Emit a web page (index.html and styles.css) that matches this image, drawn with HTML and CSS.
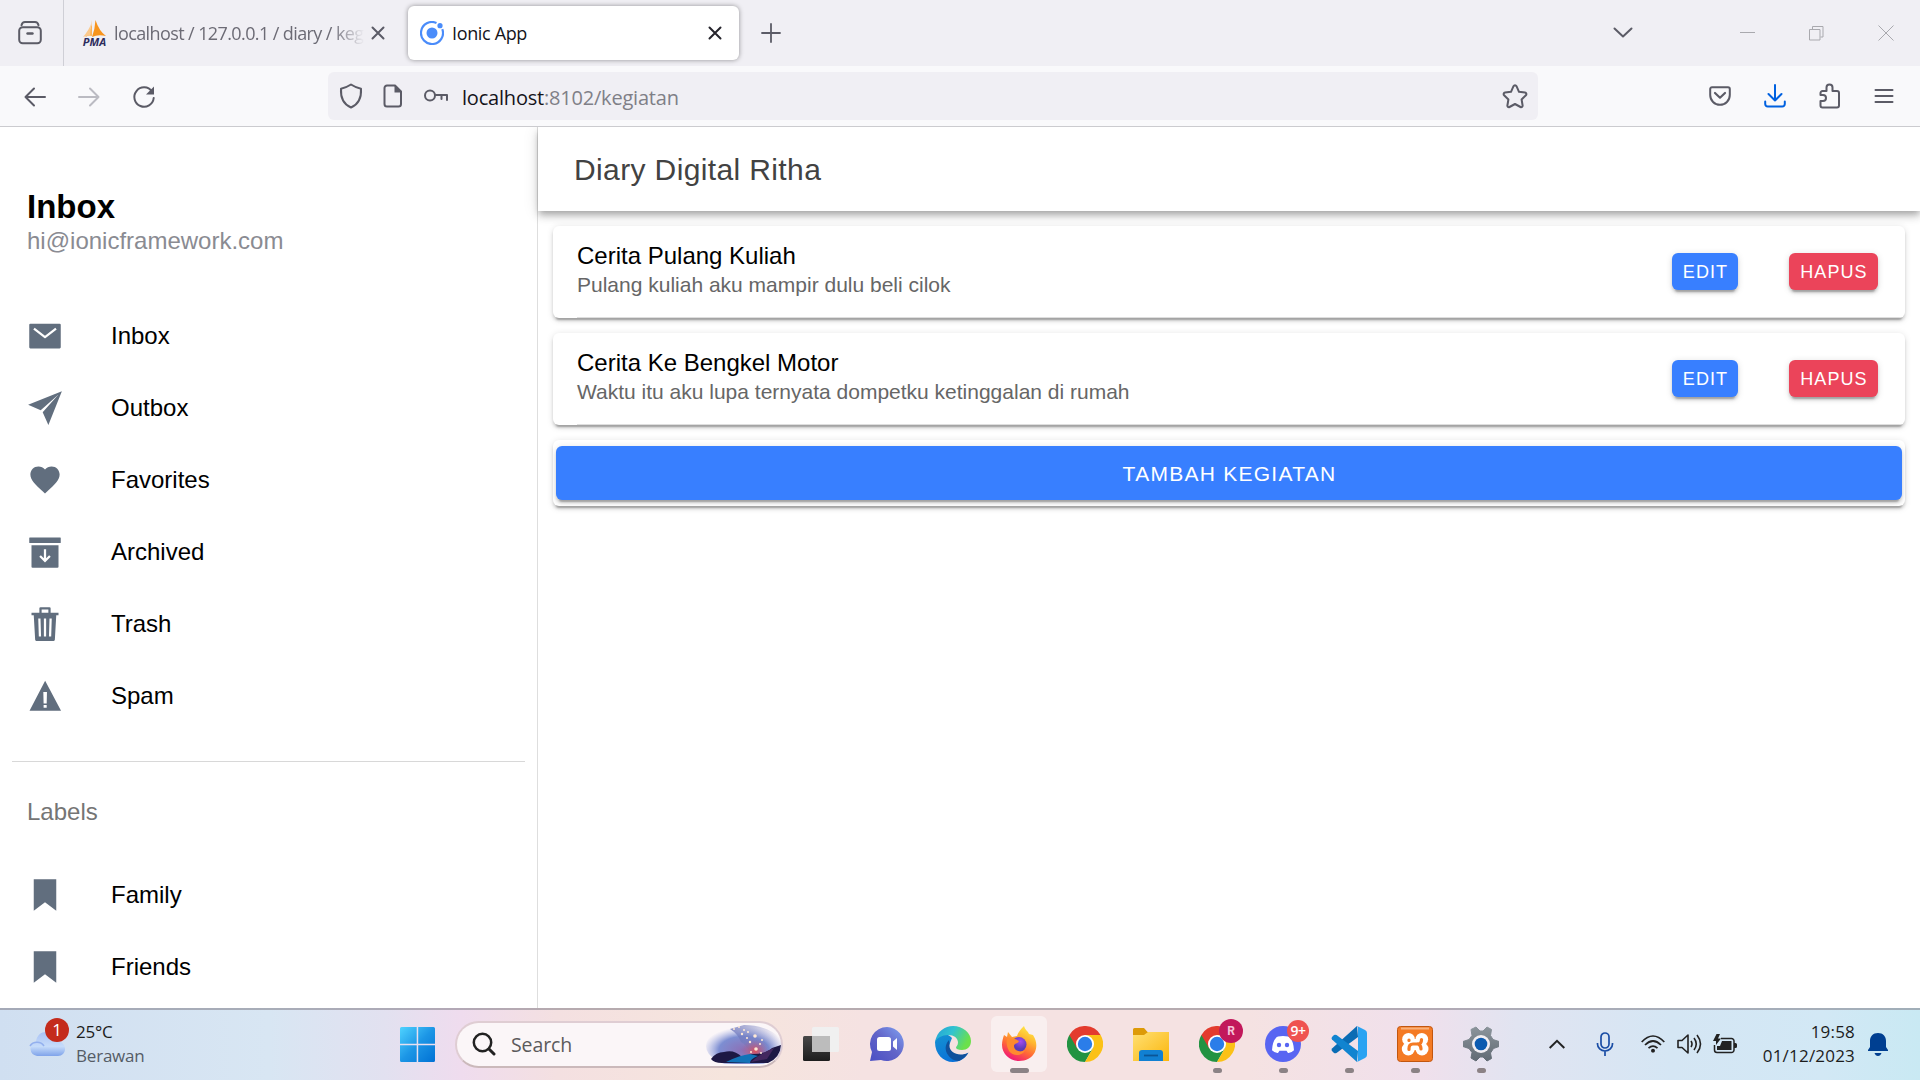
FILE: index.html
```html
<!DOCTYPE html>
<html lang="id">
<head>
<meta charset="utf-8">
<title>Ionic App</title>
<link rel="stylesheet" href="styles.css">
</head>
<body>
<div class="screen">
  <header class="tabbar">
    <div class="recent"><svg width="26" height="26" viewBox="0 0 26 26" class="ln"><path d="M4.5 5.2C5 3 6 2 8 2h10c2 0 3 1 3.500 3.200"/><rect x="2.200" y="7.200" width="21.600" height="16" rx="3.500"/><path d="M10.500 13.500h5" stroke-width="2.400"/></svg></div>
    <div class="tab tab-idle">
      <span class="pma"><svg width="24" height="18" viewBox="0 0 24 18"><path d="M9 0Q9 10 2 17Q6 15 9 16Z" fill="#fbb45c"/><path d="M12.500 0Q12 9 9 17Q15 14 23 16Q16 11 12.500 0Z" fill="#f7941d"/><path d="M8 4Q6 10 0 17Q5 15 7 16Z" fill="#fcc98b"/></svg><b>PMA</b></span>
      <span class="tab-text fade">localhost / 127.0.0.1 / diary / keg</span>
      <svg class="ln" width="14" height="14" viewBox="0 0 14 14"><path d="M1.500 1.500l11 11M12.500 1.500l-11 11"/></svg>
    </div>
    <div class="tab tab-active">
      <svg width="24" height="24" viewBox="0 0 24 24"><circle cx="12" cy="12" r="5.500" fill="#4a8cfa"/><circle cx="20" cy="4.700" r="2.600" fill="#4a8cfa"/><path d="M16.500 2A11 11 0 1 0 22.300 8.200" fill="none" stroke="#4a8cfa" stroke-width="2.200"/></svg>
      <span class="tab-text">Ionic App</span>
      <svg class="ln dark" width="14" height="14" viewBox="0 0 14 14"><path d="M1.500 1.500l11 11M12.500 1.500l-11 11"/></svg>
    </div>
    <svg class="plus ln" width="20" height="20" viewBox="0 0 20 20"><path d="M10 1v18M1 10h18" stroke-width="1.800"/></svg>
    <div class="window-controls">
      <svg class="ln" width="20" height="12" viewBox="0 0 20 12"><path d="M1.500 1.500L10 9.500l8.500-8" stroke-width="2"/></svg>
      <svg class="thin c-min" width="16" height="16" viewBox="0 0 16 16"><path d="M0 7.500h15"/></svg>
      <svg class="thin c-max" width="15" height="15" viewBox="0 0 15 15"><path d="M.500 3.500h10.500v10.500H.500zM3.500 3V.500h10.500v10.500h-2.500"/></svg>
      <svg class="thin c-close" width="16" height="16" viewBox="0 0 16 16"><path d="M.500.500l15 15M15.500.500l-15 15"/></svg>
    </div>
  </header>

  <nav class="toolbar">
    <div class="nav-buttons">
      <svg class="ln" width="22" height="20" viewBox="0 0 22 20"><path d="M21 10H1.500M10 1.500L1.500 10l8.500 8.500"/></svg>
      <svg class="ln off" width="22" height="20" viewBox="0 0 22 20"><path d="M1 10h19.500M12 1.500l8.500 8.500-8.500 8.500"/></svg>
      <svg class="ln" width="24" height="24" viewBox="0 0 24 24"><path d="M20 6.500A9.700 9.700 0 1 0 21.700 13"/><path d="M22 1.500v8h-8z" fill="#5b5b66" stroke="none"/></svg>
    </div>
    <div class="urlbar">
      <svg class="ln" width="24" height="26" viewBox="0 0 24 26"><path d="M12 1.500Q17 4.800 22 5.700C22.500 14 20 21 12 24.500C4 21 1.500 14 2 5.700Q7 4.800 12 1.500z"/></svg>
      <svg class="ln" width="20" height="24" viewBox="0 0 20 24"><path d="M4 1.500h8l6 6V20a2.500 2.500 0 0 1-2.500 2.500H4A2.500 2.500 0 0 1 1.500 20V4A2.500 2.500 0 0 1 4 1.500z"/><path d="M11.500 1v7.500H18.500z" fill="#5b5b66" stroke="none"/></svg>
      <svg class="ln" width="26" height="14" viewBox="0 0 26 14"><circle cx="7" cy="6.500" r="5"/><path d="M12 6h12v5M18.500 6v4"/></svg>
      <span class="url"><span class="host">localhost</span>:8102/kegiatan</span>
      <svg class="ln star" width="26" height="26" viewBox="0 0 26 26"><path d="M13 2.200c.7 0 1.200.4 1.500 1l2.500 5.600 6 .8c1.300.2 1.800 1.700.9 2.600l-4.300 4.300 1 6c.2 1.200-1 2.100-2.100 1.500L13 21l-5.500 3c-1.100.6-2.300-.3-2.100-1.500l1-6-4.300-4.300c-.9-.9-.4-2.400.9-2.600l6-.8 2.500-5.600c.3-.6.800-1 1.500-1z"/></svg>
    </div>
    <div class="tools">
      <svg class="ln" width="22" height="20" viewBox="0 0 22 20"><path d="M3 1.300h16a1.800 1.800 0 0 1 1.800 1.800V9a9.800 9.800 0 0 1-19.600 0V3.100A1.800 1.800 0 0 1 3 1.300z"/><path d="M6 7l5 4.700L16 7" stroke-width="2.200"/></svg>
      <svg class="ln blue" width="22" height="24" viewBox="0 0 22 24"><path d="M11 1v15.500M4.500 10l6.500 6.500 6.500-6.500M1.200 17.500v2.500A2.700 2.700 0 0 0 4 22.500h14a2.700 2.700 0 0 0 2.800-2.500v-2.500"/></svg>
      <svg class="ln" width="22" height="26" viewBox="0 0 22 26"><path d="M7.500 8V4.500a3 3 0 0 1 6 0V8H18a2 2 0 0 1 2 2v12.500a2 2 0 0 1-2 2H3.500a2 2 0 0 1-2-2V18h2.500a3 3 0 0 0 0-6H1.500V10a2 2 0 0 1 2-2z"/></svg>
      <svg class="ln" width="20" height="16" viewBox="0 0 20 16"><path d="M1.500 2h17M1.500 8h17M1.500 14h17"/></svg>
    </div>
  </nav>

  <div class="app">
    <aside class="menu">
      <h1>Inbox</h1>
      <p class="note">hi@ionicframework.com</p>
      <ul class="items">
        <li><svg viewBox="0 0 512 512"><path d="M464 80H48a16 16 0 00-16 16v320a16 16 0 0016 16h416a16 16 0 0016-16V96a16 16 0 00-16-16zM265.820 284.630a16 16 0 01-19.640 0L89.550 162.810l19.640-25.260L256 251.730l146.810-114.180 19.640 25.260z"/></svg>Inbox</li>
        <li><svg viewBox="0 0 512 512"><path d="M496 16L15.880 208 195 289 448 64 223 317l81 179L496 16z"/></svg>Outbox</li>
        <li><svg viewBox="0 0 512 512"><path d="M256 448l-30.164-27.211C118.718 322.442 48 258.610 48 179.095 48 114.221 97.918 64 162.400 64c36.399 0 70.717 16.742 93.600 43.947C278.882 80.742 313.199 64 349.600 64 414.082 64 464 114.221 464 179.095c0 79.516-70.719 143.348-177.836 241.694L256 448z"/></svg>Favorites</li>
        <li><svg viewBox="0 0 512 512"><rect x="32" y="48" width="448" height="80" rx="8"/><path d="M64 160h384v304a16 16 0 01-16 16H80a16 16 0 01-16-16z"/><path d="M256 216v166M186 314l70 70 70-70" fill="none" stroke="#fff" stroke-width="32"/></svg>Archived</li>
        <li><svg viewBox="0 0 512 512"><path fill-rule="evenodd" d="M336 96V32a16 16 0 00-16-16H192a16 16 0 00-16 16v64H64v36h32l20 348a16 16 0 0016 16h248a16 16 0 0016-16l20-348h32V96zM168 432l-8-256h32l8 256zm104 0h-32V176h32zm32-336h-96V48h96zm40 336h-32l8-256h32z"/></svg>Trash</li>
        <li><svg viewBox="0 0 512 512"><path fill-rule="evenodd" d="M258 40L36 464h448zM280 424h-44v-40h44zm0-60h-44l-4-164h52z"/></svg>Spam</li>
      </ul>
      <h2>Labels</h2>
      <ul class="items labels">
        <li><svg viewBox="0 0 512 512"><path d="M416 480L256 357.410 96 480V32h320z"/></svg>Family</li>
        <li><svg viewBox="0 0 512 512"><path d="M416 480L256 357.410 96 480V32h320z"/></svg>Friends</li>
      </ul>
    </aside>
    <main class="content">
      <div class="page-title">Diary Digital Ritha</div>
      <div class="cards">
        <article class="card"><div class="item"><div class="label"><h3>Cerita Pulang Kuliah</h3><p>Pulang kuliah aku mampir dulu beli cilok</p></div><button class="btn primary">EDIT</button><button class="btn danger">HAPUS</button></div></article>
        <article class="card"><div class="item"><div class="label"><h3>Cerita Ke Bengkel Motor</h3><p>Waktu itu aku lupa ternyata dompetku ketinggalan di rumah</p></div><button class="btn primary">EDIT</button><button class="btn danger">HAPUS</button></div></article>
        <article class="card add"><button class="btn primary block">TAMBAH KEGIATAN</button></article>
      </div>
    </main>
  </div>

  <footer class="taskbar">
    <div class="weather">
      <div class="weather-icon">
        <svg width="36" height="26" viewBox="0 0 36 26"><defs><linearGradient id="cl" x1="0" y1="0" x2="0" y2="1"><stop offset="0" stop-color="#a9c2f5"/><stop offset=".6" stop-color="#c6dcfa"/><stop offset="1" stop-color="#7fa3ea"/></linearGradient></defs><path d="M8 25a8 7.500 0 0 1-1-14.500C8 4 12 1 17 1c6 0 10 4 10 9 5 0 9 3 9 8 0 4-3 7-7 7z" fill="url(#cl)"/><path d="M1 15c3-5 11-5 14 0" fill="none" stroke="#93b0ee" stroke-width="1.500"/></svg>
        <span class="count">1</span>
      </div>
      <div class="weather-text"><span>25°C</span><span class="dim">Berawan</span></div>
    </div>
    <div class="slot start"><svg width="35" height="35" viewBox="0 0 35 35"><defs><linearGradient id="wn" x1="0" y1="0" x2="1" y2="1"><stop offset="0" stop-color="#4fd3ff"/><stop offset=".5" stop-color="#1c96e6"/><stop offset="1" stop-color="#0071d4"/></linearGradient></defs><path fill="url(#wn)" d="M1.500 0H16.700V16.700H0V1.500A1.500 1.500 0 0 1 1.500 0zM18.200 0H33.500A1.500 1.500 0 0 1 35 1.500V16.700H18.200zM0 18.200H16.700V35H1.500A1.500 1.500 0 0 1 0 33.500zM18.200 18.200H35V33.500A1.500 1.500 0 0 1 33.500 35H18.200z"/></svg></div>
    <div class="search">
      <svg width="24" height="24" viewBox="0 0 24 24" fill="none" stroke="#222" stroke-width="2.500" stroke-linecap="round"><circle cx="10.500" cy="10.500" r="8.700"/><path d="M17 17l5 5" stroke-width="3"/></svg>
      <span>Search</span>
      <svg class="art" width="76" height="40" viewBox="0 0 76 40"><defs><radialGradient id="sky" cx=".5" cy=".6" r=".55"><stop offset="0" stop-color="#8d6fb5"/><stop offset=".6" stop-color="#7d8ed2"/><stop offset="1" stop-color="#aab4e6" stop-opacity="0"/></radialGradient><radialGradient id="glow"><stop offset="0" stop-color="#e0505a"/><stop offset="1" stop-color="#a0609a" stop-opacity="0"/></radialGradient><linearGradient id="ridge" x1="0" y1="0" x2="1" y2="0"><stop offset="0" stop-color="#7079bd" stop-opacity=".8"/><stop offset="1" stop-color="#7079bd" stop-opacity="0"/></linearGradient></defs><ellipse cx="38" cy="22" rx="38" ry="21" fill="url(#sky)"/><path d="M24 5Q32 10 35 18Q42 21 45 33H74V14Q60 1 38 1z" fill="url(#ridge)"/><ellipse cx="49" cy="27" rx="14" ry="12" fill="url(#glow)"/><path d="M5 35Q10 28 18 28Q28 25 36 33L46 30Q60 30 66 24L75 21Q74 34 62 39H16Q8 39 5 35z" fill="#1d1844"/><path d="M20 38Q34 31 44 30L52 32Q44 35 44 39z" fill="#1273b8"/><path d="M45 38Q56 28 68 24L61 35z" fill="#43285f"/><g fill="#ffe9d5"><circle cx="28" cy="5" r="1"/><circle cx="33" cy="3" r="1"/><circle cx="36" cy="10" r="1.200"/><circle cx="42" cy="8" r="1"/><circle cx="49" cy="12" r="1.800"/><circle cx="44" cy="18" r="1.200"/><circle cx="41" cy="14" r="1"/><circle cx="50" cy="25" r="1.800"/><circle cx="54" cy="20" r="1"/><circle cx="45" cy="28" r="1"/><circle cx="55" cy="29" r="1"/><circle cx="38" cy="6" r="1"/><circle cx="56" cy="16" r="1"/></g></svg>
    </div>
    <div class="slot view"><svg width="36" height="34" viewBox="0 0 36 34"><defs><linearGradient id="tv" x1="0" y1="0" x2="0" y2="1"><stop offset="0" stop-color="#484848"/><stop offset="1" stop-color="#1d1d1d"/></linearGradient></defs><rect y="9" width="27" height="25" rx="1.500" fill="url(#tv)"/><rect x="9" width="27" height="25" rx="1.500" fill="#f0f0f0"/><path d="M9 9h18v16H9z" fill="#bcbcbc"/></svg></div>
    <div class="slot"><svg width="34" height="34" viewBox="0 0 34 34"><defs><linearGradient id="ct" x1="0" y1="1" x2="1" y2="0"><stop offset="0" stop-color="#4a4fc4"/><stop offset=".5" stop-color="#6264c8"/><stop offset="1" stop-color="#7fa2f2"/></linearGradient></defs><path d="M17 0a17 17 0 1 1-6 33L0 34l2-9A17 17 0 0 1 17 0z" fill="url(#ct)"/><rect x="7" y="10" width="14" height="14" rx="2.500" fill="#fff"/><path d="M23 14.500l4-3.500v12l-4-3.500z" fill="#fff"/></svg></div>
    <div class="slot"><svg width="36" height="36" viewBox="0 0 36 36"><defs><linearGradient id="e1" x1="0" y1="0" x2="1" y2=".4"><stop offset="0" stop-color="#219fd8"/><stop offset=".5" stop-color="#32c3d0"/><stop offset="1" stop-color="#6be04b"/></linearGradient><linearGradient id="e2" x1="0" y1="0" x2=".4" y2="1"><stop offset="0" stop-color="#1592d2"/><stop offset="1" stop-color="#0a72d8"/></linearGradient></defs><path d="M0 16c2-8 12-10 17-4l-4 10c2 8 12 9 20 5-3 6-9 9-15 9C8 36 0 28 0 16z" fill="url(#e2)"/><path d="M0 16C2 5 10 0 18 0c10 0 18 7 18 15 0 6-4 9-9 9-4 0-6-1-6-2.500 0-1 2-2 2-5C23 12 19 9 13 9 7 9 2 12 0 16z" fill="url(#e1)"/><path d="M14 14c-3 3-4 7-3 11 2 6 7 10 13 10 4-2 8-5 9.500-8.500-2 1.500-5 2-8 2-6 0-11-4-11-8.500 0-2 0-4-.500-6z" fill="#10509c"/></svg></div>
    <div class="slot current"><svg width="36" height="36" viewBox="0 0 36 36"><defs><linearGradient id="f1" x1=".8" y1="0" x2=".3" y2="1"><stop offset="0" stop-color="#fff04a"/><stop offset=".35" stop-color="#ffb52e"/><stop offset=".65" stop-color="#ff6a36"/><stop offset="1" stop-color="#f0127a"/></linearGradient><radialGradient id="f2" cx=".6" cy=".3"><stop offset="0" stop-color="#a64cf0"/><stop offset="1" stop-color="#5b3bb8"/></radialGradient></defs><path d="M3 9l3 2 1-5 4 5 5-1c1-4 4-7 7-10 1 4 4 5 5 8l4 1c4 6 4 12 2 17-3 6-9 9-16 9C9 35 1 28 1 19c0-4 1-7 2-10z" fill="url(#f1)"/><circle cx="18" cy="18.500" r="7.500" fill="url(#f2)"/><path d="M6 13c5-1 9 0 12 2-1 3-5 2-5 5 0 5 7 7 11 4-2 6-12 7-16 1-2-4-3-8-2-12z" fill="#ff8a2e"/></svg></div>
    <div class="slot"><svg width="36" height="36" viewBox="0 0 36 36"><g id="chrome"><path d="M18 18L2.400 9a18 18 0 0 1 31.200 0z" fill="#e33b2e"/><path d="M18 18L2.400 9A18 18 0 0 0 18 36l7.800-13.500z" fill="#229342"/><path d="M18 9h15.600A18 18 0 0 1 18 36l7.800-13.500z" fill="#fbc116"/><path d="M2.400 9L10.200 22.500 18 9z" fill="#e33b2e"/><circle cx="18" cy="18" r="9" fill="#fff"/><circle cx="18" cy="18" r="7.200" fill="#2b7de9"/></g></svg></div>
    <div class="slot"><svg width="36" height="33" viewBox="0 0 36 33"><defs><linearGradient id="fo" x1="0" y1="0" x2="1" y2="1"><stop offset="0" stop-color="#ffe074"/><stop offset="1" stop-color="#fbb60c"/></linearGradient></defs><path d="M0 1.500A1.500 1.500 0 0 1 1.500 0H11l3.500 4H34a2 2 0 0 1 2 2v5H0z" fill="#dd9a08"/><path d="M0 7h11l4-3h21v29H0z" fill="url(#fo)"/><path d="M6 33V25a3 3 0 0 1 3-3h18a3 3 0 0 1 3 3v8z" fill="#1180d2"/><path d="M11 27.500h14" stroke="#0b5596" stroke-width="1.800"/></svg></div>
    <div class="slot running"><svg width="36" height="36" viewBox="0 0 36 36"><use href="#chrome"/></svg><span class="badge profile">R</span></div>
    <div class="slot running"><svg width="36" height="36" viewBox="0 0 36 36"><circle cx="18" cy="18" r="18" fill="#5865f2"/><path d="M13 10.500q5-1.200 10 0l1.500.8q4 4 4.500 13-3 3-6 2.700l-1.500-2.300h-7L13 27q-3 .3-6-2.700.5-9 4.500-13z" fill="#fff"/><circle cx="14" cy="19" r="2.200" fill="#5865f2"/><circle cx="22" cy="19" r="2.200" fill="#5865f2"/></svg><span class="badge alert">9+</span></div>
    <div class="slot running"><svg width="36" height="36" viewBox="0 0 36 36"><path d="M26 0L1 22.500q-1 1.500 0 2.500l2 2q1 .7 2.500 0L27 11z" fill="#0a6cb4"/><path d="M26 36L1 13.500q-1-1.500 0-2.500l2-2q1-.7 2.500 0L27 25z" fill="#1184d0"/><path d="M26 0l8 4q2 1 2 3v22q0 2-2 3l-8 4q1-1 1-3V3q0-2-1-3z" fill="#29a3f2"/></svg></div>
    <div class="slot running"><svg width="36" height="36" viewBox="0 0 36 36"><rect x=".5" y=".5" width="35" height="35" rx="3" fill="#f47a24" stroke="#c2560f"/><path d="M4 2.500h28" stroke="#f9b07a" stroke-width="2"/><g fill="#fff"><circle cx="11.500" cy="13.300" r="6.300"/><circle cx="24.800" cy="13.300" r="6.300"/><circle cx="11.300" cy="23" r="6.500"/><circle cx="25" cy="23" r="6.500"/><path d="M11 13h14v11H11z"/></g><path d="M12 23.500v-1q0-4.500 4-4.500h5q3.500 0 3.500-4.500M21 18q3 1 3 5M12 14v.500" fill="none" stroke="#f47a24" stroke-width="3.200" stroke-linecap="round"/></svg></div>
    <div class="slot running"><svg width="36" height="36" viewBox="0 0 36 36"><defs><linearGradient id="gr" x1="0" y1="0" x2="0" y2="1"><stop offset="0" stop-color="#8b949b"/><stop offset="1" stop-color="#616b74"/></linearGradient></defs><path d="M13 1l-5 2.500 1 6-3 4-6 2v5l6 2 3 4-1 5.500L13 35l4-4h3l4 4 4.500-2.500-1-5.500 3-4.500 5.500-2v-5l-6-2-2.500-4 1-6L24 1l-4 4h-3z" fill="url(#gr)" stroke="url(#gr)" stroke-linejoin="round"/><circle cx="18" cy="18" r="9" fill="#f1eef2"/><circle cx="18" cy="18" r="6.300" fill="#0c5bb0"/></svg></div>
    <div class="tray">
      <svg width="16" height="10" viewBox="0 0 16 10" fill="none" stroke="#222" stroke-width="2"><path d="M.7 9L8 1.800 15.300 9"/></svg>
      <svg class="mic" width="18" height="24" viewBox="0 0 18 24" fill="none" stroke="#1a4da5" stroke-width="1.700"><rect x="5" y="1" width="8" height="15" rx="4"/><path d="M1.500 11v1a7.500 7 0 0 0 15 0v-1M9 19v5"/></svg>
      <svg class="wifi" width="24" height="18" viewBox="0 0 24 18" fill="none" stroke="#222" stroke-width="1.700"><path d="M.700 7Q12-5 23.300 7M4 10Q12 2 20 10M7.500 13.200Q12 9 16.500 13.200"/><circle cx="12" cy="15.700" r="1.600" fill="#222" stroke="none"/><circle cx="12" cy="15.700" r="1" /></svg>
      <svg class="vol" width="25" height="22" viewBox="0 0 25 22" fill="none" stroke="#222" stroke-width="1.600" stroke-linejoin="round"><path d="M1 7.500h4L11 2v18l-6-5.500H1z"/><path d="M14 8q2 3 0 6M17 5q4.500 6 0 12M20 2q7 9 0 18"/></svg>
      <svg class="bat" width="24" height="20" viewBox="0 0 24 20"><path d="M8 4.500h10.500a2.500 2.500 0 0 1 2.500 2.500v9a2.500 2.500 0 0 1-2.500 2.500H4a2.500 2.500 0 0 1-2.500-2.500v-5" fill="none" stroke="#222" stroke-width="1.500"/><path d="M9 7h9.500v9H4v-4h3z" fill="#222"/><path d="M21 9h1.500a1.500 1.500 0 0 1 1.500 1.500v2a1.500 1.500 0 0 1-1.500 1.500H21z" fill="#222"/><path d="M3.500 0L0 7h3v4l5-6.500H5L7 0z" fill="#222"/></svg>
      <div class="clock"><span>19:58</span><span>01/12/2023</span></div>
      <svg class="bell" width="20" height="23" viewBox="0 0 20 23" fill="#003f91"><path d="M10 0c5 0 8 3.500 8 8v6l2 3v1H0v-1l2-3V8c0-4.500 3-8 8-8zM6.500 20h7q-1 3-3.500 3t-3.500-3z"/></svg>
    </div>
  </footer>
</div>
</body>
</html>
```
FILE: styles.css
```css
* { box-sizing: border-box; }
body, h1, h2, h3, p, ul { margin: 0; padding: 0; }
body { font-family: "Liberation Sans", Arial, sans-serif; background: #fff; overflow: hidden; }
svg { display: block; flex: none; }
ul { list-style: none; }
.screen { width: 1920px; height: 1080px; display: flex; flex-direction: column; }
.ln { fill: none; stroke: #5b5b66; stroke-width: 2; stroke-linecap: round; stroke-linejoin: round; }
.ln.dark { stroke: #25242c; }
.ln.off { stroke: #bbbbc2; }
.ln.blue { stroke: #0061e0; }
.thin { fill: none; stroke: #a9a9ae; stroke-width: 1; }

/* browser tabs */
.tabbar { height: 66px; flex: none; background: #f0eff4; display: flex; align-items: center; font-family: "Open Sans", sans-serif; }
.recent { width: 64px; height: 66px; border-right: 1px solid #cfcfd6; display: flex; align-items: center; padding-left: 17px; }
.tab { display: flex; align-items: center; font-size: 18px; letter-spacing: -.35px; }
.tab-idle { width: 344px; padding: 0 23px 0 18px; color: #6c6b75; }
.tab-idle .tab-text { width: 253px; margin: 0 4px 0 7px; letter-spacing: -.6px; }
.pma { width: 25px; display: flex; flex-direction: column; align-items: center; }
.pma b { font: italic bold 11px/8px "Open Sans", sans-serif; color: #2d2c5c; letter-spacing: 0; }
.tab-text { white-space: nowrap; }
.fade { mask-image: linear-gradient(90deg, #000 86%, transparent 99%); }
.tab-active { width: 331px; height: 54px; background: #fff; border-radius: 6px; box-shadow: 0 0 5px rgba(0, 0, 0, .4); padding: 0 17px 0 12px; color: #15141a; }
.tab-active .tab-text { flex: 1; margin-left: 8px; }
.plus { margin-left: 22px; }
.window-controls { margin-left: auto; display: flex; align-items: center; padding-right: 26px; }
.c-min { margin-left: 107px; }
.c-max { margin-left: 53px; }
.c-close { margin-left: 54px; }

/* address row */
.toolbar { height: 61px; flex: none; background: #f9f9fb; border-bottom: 1px solid #cbcbcf; display: flex; align-items: center; }
.nav-buttons { width: 328px; display: flex; align-items: center; gap: 32px; padding: 2px 0 0 24px; }
.urlbar { width: 1210px; height: 48px; background: #f0eff4; border-radius: 6px; display: flex; align-items: center; padding: 0 10px 0 11px; }
.urlbar svg + svg { margin-left: 20px; }
.url { font: 20px "Open Sans", sans-serif; letter-spacing: -.2px; color: #7f7f87; margin-left: 13px; padding-top: 2px; }
.host { color: #15141a; }
.star { margin-left: auto; }
.tools { flex: 1; display: flex; align-items: center; justify-content: flex-end; gap: 33px; padding-right: 26px; }

/* side menu */
.app { flex: 1; min-height: 0; display: flex; overflow: hidden; }
.menu { width: 538px; flex: none; border-right: 1px solid #dedede; padding: 60px 12px 0; }
.menu h1 { font-size: 33px; line-height: 39px; font-weight: 700; padding-left: 15px; }
.note { font-size: 24px; line-height: 30px; color: #8a8b92; padding-left: 15px; }
.items { margin-top: 44px; }
.items li { display: flex; align-items: center; height: 72px; padding-left: 15px; gap: 48px; font-size: 24px; color: #000; }
.items svg { width: 36px; height: 36px; margin-bottom: 1px; fill: #616e7e; }
.menu h2 { margin-top: 29px; border-top: 1px solid #d8d8d8; padding: 35px 0 0 15px; font-size: 24px; line-height: 30px; font-weight: 400; color: #757575; }
.labels { margin-top: 32px; }

/* diary page */
.content { flex: 1; }
.page-title { height: 84px; padding-left: 36px; font-size: 30px; line-height: 85px; letter-spacing: .375px; color: #424242; background: #fff; box-shadow: 0 3px 6px -1.500px rgba(0,0,0,.2), 0 6px 7.500px rgba(0,0,0,.14), 0 1.500px 15px rgba(0,0,0,.12); }
.cards { display: flex; flex-direction: column; gap: 15px; padding: 15px; }
.card { background: #fff; border-radius: 6px; box-shadow: 0 4.500px 1.500px -3px rgba(0,0,0,.2), 0 3px 3px rgba(0,0,0,.14), 0 1.500px 7.500px rgba(0,0,0,.12); height: 92px; padding-left: 24px; overflow: hidden; }
.item { height: 92px; border-bottom: 1px solid #dedede; display: flex; align-items: center; padding-right: 27px; }
.label { flex: 1; padding-bottom: 4px; }
.label h3 { font-size: 24px; line-height: 29px; font-weight: 400; color: #000; }
.label p { font-size: 21px; line-height: 29px; color: #666; }
.btn { height: 37px; border: 0; border-radius: 6px; color: #fff; font: 18px "Liberation Sans", Arial, sans-serif; letter-spacing: 1.080px; padding: 1px 0 0 1px; box-shadow: 0 4.500px 1.500px -3px rgba(0,0,0,.2), 0 3px 3px rgba(0,0,0,.14), 0 1.500px 7.500px rgba(0,0,0,.12); }
.item .btn { width: 66px; }
.item .danger { width: 89px; margin-left: 51px; }
.primary { background: #387fff; }
.danger { background: #eb445a; }
.card.add { height: 66px; padding: 6px 3px; }
.block { width: 100%; height: 54px; font-size: 21px; letter-spacing: 1.260px; display: block; }

/* windows taskbar */
.taskbar { height: 72px; flex: none; border-top: 2px solid rgba(120, 115, 125, .5); padding-bottom: 2px; background: linear-gradient(90deg, #d0dff1 0, #d8e6f3 14%, #e2e1f0 20%, #efdcee 24%, #f4e0e1 29%, #f6e5dd 38%, #f5e2e2 45%, #f5e2e2 65%, #f0e0ec 74%, #e1e4f1 79%, #d5e6f4 87%, #d2e8f5 95%, #c9e9f3 100%); display: flex; align-items: center; font-family: "Open Sans", sans-serif; }
.weather { width: 384px; display: flex; align-items: center; gap: 11px; padding-left: 29px; }
.weather-icon { position: relative; width: 36px; padding-top: 0; }
.count { position: absolute; left: 16px; top: -13px; width: 24px; height: 24px; border-radius: 50%; background: #c42b1c; color: #fff; font-size: 17px; line-height: 24px; text-align: center; }
.weather-text { display: flex; flex-direction: column; font-size: 17px; line-height: 24px; letter-spacing: -.2px; color: #1c1c1c; }
.dim { color: #555c66; }
.slot { width: 66px; height: 68px; display: flex; align-items: center; justify-content: center; position: relative; }
.search { width: 328px; height: 47px; margin: 0 5px; border: 2px solid #dfcdd3; border-bottom-color: #cbb9bb; border-radius: 24px; background: #fbf6f8; display: flex; align-items: center; padding-left: 15px; }
.search span { font-size: 19.500px; color: #5c5a5c; margin-left: 15px; letter-spacing: -.1px; }
.art { margin: 0 -1px 0 auto; }
.current::before { content: ""; position: absolute; width: 56px; height: 56px; left: 5px; top: 6px; border-radius: 6px; background: rgba(255, 255, 255, .45); }
.current svg { position: relative; }
.running::after, .current::after { content: ""; position: absolute; left: 28.500px; bottom: 5px; width: 9px; height: 5px; border-radius: 3px; background: #8b8285; }
.current::after { left: 24px; width: 19px; }
.badge { position: absolute; border-radius: 50%; color: #fff; text-align: center; }
.profile { width: 24px; height: 24px; left: 35px; top: 9px; background: #c2185b; font: bold 12px/24px Roboto, sans-serif; color: #f5c3d8; }
.alert { width: 22px; height: 22px; left: 37px; top: 10px; background: #ef5350; font: 600 14px/21px "Open Sans", sans-serif; letter-spacing: -.5px; }
.tray { flex: 1; display: flex; align-items: center; padding-left: 35px; }
.mic { margin-left: 31px; }
.wifi { margin-left: 27px; }
.vol { margin-left: 12px; }
.bat { margin-left: 11px; }
.clock { width: 106px; margin-left: 12px; display: flex; flex-direction: column; align-items: flex-end; font-size: 17px; line-height: 24px; letter-spacing: .2px; color: #1c1c1c; }
.bell { margin-left: 13px; }
```
